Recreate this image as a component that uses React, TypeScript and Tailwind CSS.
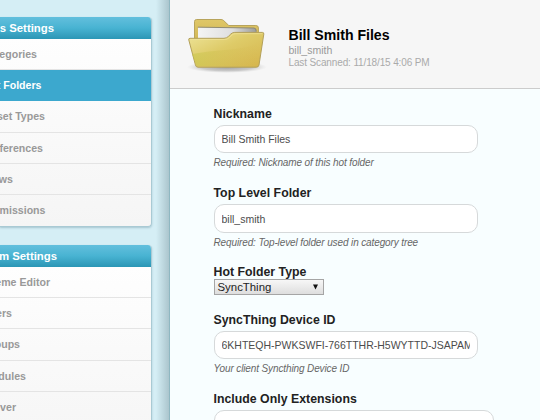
type MenuItem = { label: string; width: string; active?: boolean; size: string };

const categorySettings: MenuItem[] = [
  { label: 'egories', width: 'w-[37px]', size: 'h-[31px]' },
  { label: 't Folders', width: 'w-[41.5px]', size: 'h-[31px]', active: true },
  { label: 'set Types', width: 'w-[45px]', size: 'h-8' },
  { label: 'ferences', width: 'w-[43px]', size: 'h-[31px]' },
  { label: 'ws', width: 'w-[13px]', size: 'h-[31px]' },
  { label: 'missions', width: 'w-[45.5px]', size: 'h-[31px]' },
];

const systemSettings: MenuItem[] = [
  { label: 'eme Editor', width: 'w-[50px]', size: 'h-[31px]' },
  { label: 'ers', width: 'w-[12px]', size: 'h-[31px]' },
  { label: 'oups', width: 'w-[20px]', size: 'h-8' },
  { label: 'dules', width: 'w-[26px]', size: 'h-[31px]' },
  { label: 'ver', width: 'w-[16px]', size: 'h-[31px]' },
  { label: '', width: 'w-0', size: 'h-[31px]' },
];

function Panel({ title, width, items }: { title: string; width: string; items: MenuItem[] }) {
  return (
    <section className="w-[152px] shrink-0 overflow-hidden rounded-r-[4px] border-r border-b border-[#a9cad4] bg-linear-to-b from-white to-[#f5f5f5] shadow-[0_1px_2px_rgba(60,110,130,0.3)]">
      <h2 className="flex h-[22px] items-center bg-linear-to-b from-[#62bfdd] via-[#48b3d2] to-[#2b96b5] pt-px text-[11.35px] font-bold text-white">
        <span className={`flex justify-end whitespace-nowrap ${width}`}>{title}</span>
      </h2>
      <ul>
        {items.map((item, i) => (
          <li
            key={i}
            className={`flex items-center pt-px text-[10.6px] font-bold ${item.size} ${
              item.active ? 'bg-[#3ca8ce] text-white' : 'text-[#999] not-last:border-b border-[#e4e4e4]'
            }`}
          >
            <span className={`flex justify-end whitespace-nowrap ${item.width}`}>{item.label}</span>
          </li>
        ))}
      </ul>
    </section>
  );
}

function FolderIcon() {
  return (
    <svg className="h-[60px] w-[84px]" viewBox="0 0 84 60">
      <defs>
        <linearGradient id="front" x1="0" y1="0" x2="1" y2="1">
          <stop offset="0" stopColor="#eee59b" />
          <stop offset=".45" stopColor="#decb68" />
          <stop offset="1" stopColor="#d5b44b" />
        </linearGradient>
        <linearGradient id="back" x1="0" y1="0" x2="0" y2="1">
          <stop offset="0" stopColor="#dfc768" />
          <stop offset="1" stopColor="#c7a943" />
        </linearGradient>
        <linearGradient id="paper" x1="0" y1="0" x2="1" y2="0">
          <stop offset="0" stopColor="#f4f4f4" />
          <stop offset=".6" stopColor="#dededf" />
          <stop offset="1" stopColor="#9c9c98" />
        </linearGradient>
        <linearGradient id="lower" x1="0" y1="0" x2="1" y2="0">
          <stop offset="0" stopColor="#c9c84e" stopOpacity=".6" />
          <stop offset="1" stopColor="#d4b44a" stopOpacity="0" />
        </linearGradient>
        <radialGradient id="shade">
          <stop offset="0" stopColor="#666" stopOpacity=".6" />
          <stop offset=".65" stopColor="#777" stopOpacity=".35" />
          <stop offset="1" stopColor="#aaa" stopOpacity="0" />
        </radialGradient>
      </defs>
      <ellipse cx="43" cy="53" rx="40" ry="6" fill="url(#shade)" />
      <path d="M10.5 45V7.5q0-2 2.2-2H37q1.6 0 2.8 1.2l5 4.8h27q2.6 0 2.6 2.4V42Z" fill="url(#back)" stroke="#b8a45c" />
      <path d="M14 28V13.2L70 14q2.3 0 2.3 2v16Z" fill="url(#paper)" />
      <path d="M13.8 13.2L70 14q2.3 0 2.3 3.5" fill="none" stroke="#88836c" strokeWidth=".9" />
      <path d="M6 24.3h34q2.5 0 4.4-1.9l2.4-2.4q1.6-1.6 4-1.6h27.6q1.6 0 1.4 1.7L75 51q-.4 2.2-2.6 2.2H14q-2.2 0-2.6-2.4L4.8 26q-.4-1.7 1.2-1.7Z" fill="url(#front)" stroke="#b3a05a" />
      <path d="M8 40q17-3 33-4 18-1.2 33-6L73 52H14q-2 0-2.3-2Z" fill="url(#lower)" />
      <path d="M6 25.5h34.3q3 0 5.1-2l2.5-2.4q1.4-1.4 3.5-1.4h27" fill="none" stroke="#f0e39a" strokeWidth=".7" />
    </svg>
  );
}

function TextField({ label, value, hint, box }: { label: string; value: string; hint: string; box: string }) {
  return (
    <div className="flex flex-col items-start">
      <label className="h-5 text-[12.3px] leading-[18px] font-bold tracking-[0.02px] whitespace-nowrap text-[#222]">{label}</label>
      <div className={`flex items-center rounded-[10px] border border-[#d6d9da] bg-white px-[7px] text-[10.5px] text-[#4c4c4c] ${box}`}>
        <span className="w-full overflow-hidden leading-4 whitespace-nowrap">{value}</span>
      </div>
      <p className="mt-[2px] h-[14px] text-[10px] leading-[15px] tracking-[-0.12px] whitespace-nowrap text-[#666] italic">{hint}</p>
    </div>
  );
}

export default function App() {
  return (
    <div className="flex h-[420px] w-[540px] overflow-hidden bg-[#f8feff] font-['Liberation_Sans',Arial,sans-serif]">
      <aside className="flex w-[170px] shrink-0 overflow-hidden border-r border-[#8fb7c1] bg-[#d5eef5]">
        <div className="flex w-[156px] shrink-0 flex-col gap-[18px] pt-[17px]">
          <Panel title="s Settings" width="w-[54px]" items={categorySettings} />
          <Panel title="m Settings" width="w-[57px]" items={systemSettings} />
        </div>
        <div className="flex-1 bg-linear-to-r from-[#d5eef5] to-[#abc5cd]" />
      </aside>
      <main className="flex min-w-0 flex-1 flex-col">
        <header className="flex h-[89px] shrink-0 items-start border-b border-[#ccc] bg-[#f6f6f6] pt-[14px] pl-[14px]">
          <FolderIcon />
          <div className="ml-[20.5px] pt-3">
            <h1 className="h-[18px] text-[14.1px] leading-[18px] font-bold text-black">Bill Smith Files</h1>
            <p className="h-3 text-[10.5px] leading-3 text-[#999]">bill_smith</p>
            <p className="h-3 text-[10px] leading-[13px] tracking-[-0.13px] text-[#aaa]">Last Scanned: 11/18/15 4:06 PM</p>
          </div>
        </header>
        <form className="flex flex-col pt-4 pl-[43.5px]">
          <TextField label="Nickname" value="Bill Smith Files" hint="Required: Nickname of this hot folder" box="h-7 w-[264.5px]" />
          <div className="mt-[15px]">
            <TextField label="Top Level Folder" value="bill_smith" hint="Required: Top-level folder used in category tree" box="h-[29px] w-[264.5px]" />
          </div>
          <div className="mt-[15px] flex flex-col">
            <label className="h-[15px] text-[12.3px] leading-4 font-bold tracking-[0.02px] text-[#222]">Hot Folder Type</label>
            <div className="flex h-4 w-[110px] items-center justify-between border border-[#a5a5a5] bg-linear-to-b from-[#f7f7f7] to-[#dedede] pr-1 pl-[3px] text-[11.4px] text-[#222]">
              <span className="pt-px leading-[15px]">SyncThing</span>
              <svg className="h-[6px] w-[7px]" viewBox="0 0 7 6"><path d="M1 .5h5L3.5 5.5Z" fill="#111" /></svg>
            </div>
          </div>
          <div className="mt-4">
            <TextField label="SyncThing Device ID" value="6KHTEQH-PWKSWFI-766TTHR-H5WYTTD-JSAPAMM" hint="Your client Syncthing Device ID" box="h-7 w-[264.5px]" />
          </div>
          <div className="mt-[15px]">
            <TextField label="Include Only Extensions" value="" hint="" box="h-7 w-[280px]" />
          </div>
        </form>
      </main>
    </div>
  );
}
